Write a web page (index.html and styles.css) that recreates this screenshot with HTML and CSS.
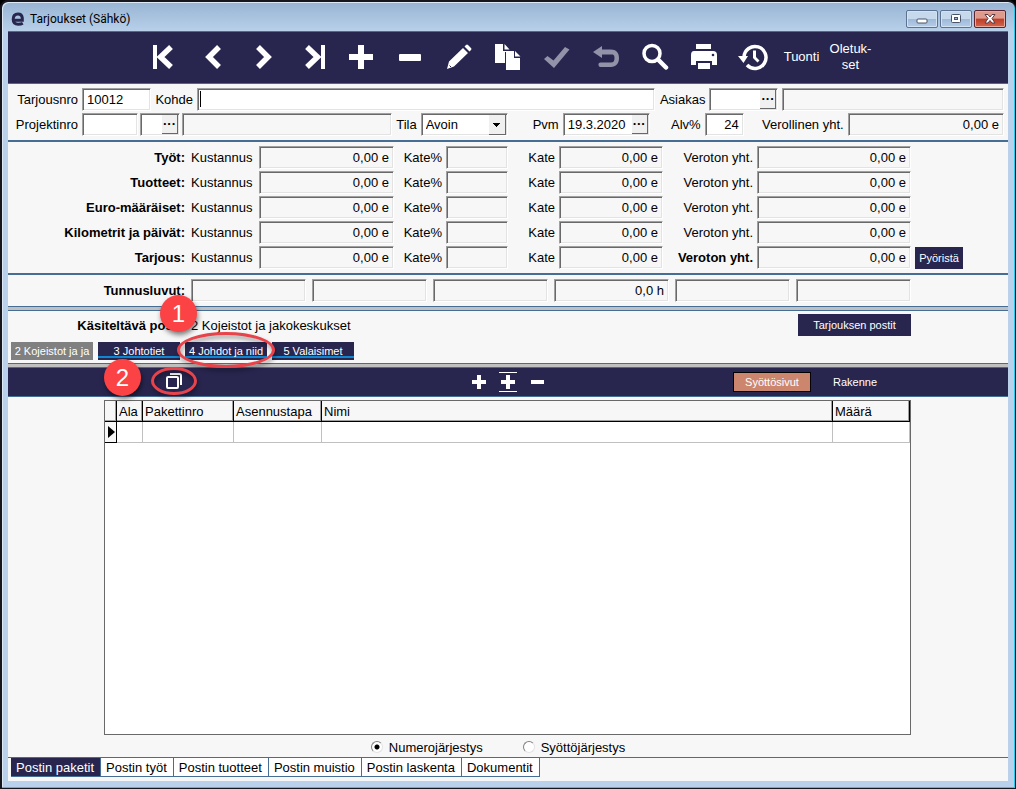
FILE: index.html
```html
<!DOCTYPE html>
<html lang="fi">
  <head>
    <meta charset="UTF-8" />
    <meta name="viewport" content="width=device-width, initial-scale=1.0" />
    <title>Tarjoukset (Sähkö)</title>
    <link rel="stylesheet" href="styles.css">
  </head>
  <body>
    <div class="window">
      <header class="titlebar">
        <svg class="logo" width="14" height="16" viewBox="0 0 14 16"><path d="M2.500 9.200H11.300V7C11 4.300 9.400 3 7 3 4 3 2.200 5 2.200 8.300s1.800 5 5 5c1.800 0 3.400-.3 4.600-1" fill="none" stroke="#28264f" stroke-width="3"/></svg>
        <h1>Tarjoukset (Sähkö)</h1>
        <div class="window-buttons">
          <button class="win-btn" aria-label="Pienennä"><svg width="14" height="12" viewBox="0 0 14 12"><rect x="2" y="6" width="10" height="4" rx="1" fill="#fff" stroke="#4a5468"/></svg></button>
          <button class="win-btn" aria-label="Suurenna"><svg width="14" height="12" viewBox="0 0 14 12"><rect x="2.500" y="1.500" width="9" height="8" rx="1" fill="#fff" stroke="#4a5468"/><rect x="5.500" y="4.500" width="3" height="2" fill="#9db9d8" stroke="#4a5468"/></svg></button>
          <button class="win-btn close" aria-label="Sulje"><svg width="14" height="12" viewBox="0 0 14 12"><path d="M2 1.500h3L7 4l2-2.500h3L9 5.500l3 4.500H9L7 7.500 5 10H2l3-4.500z" fill="#fff" stroke="#5a3a44"/></svg></button>
        </div>
      </header>

      <main class="content">
        <nav class="toolbar">
          <button aria-label="Ensimmäinen"><svg width="28" height="28" viewBox="0 0 28 28"><path d="M2 2h4v24H2z" fill="#fff"/><path d="M20 4 9.500 14 20 24" fill="none" stroke="#fff" stroke-width="5.500"/></svg></button>
          <button aria-label="Edellinen"><svg width="28" height="28" viewBox="0 0 28 28"><path d="M19 4 9 14l10 10" fill="none" stroke="#fff" stroke-width="5.500"/></svg></button>
          <button aria-label="Seuraava"><svg width="28" height="28" viewBox="0 0 28 28"><path d="M9 4l10 10L9 24" fill="none" stroke="#fff" stroke-width="5.500"/></svg></button>
          <button aria-label="Viimeinen"><svg width="28" height="28" viewBox="0 0 28 28"><path d="M23 2h4v24h-4z" fill="#fff"/><path d="M9 4l10.500 10L9 24" fill="none" stroke="#fff" stroke-width="5.500"/></svg></button>
          <button aria-label="Lisää"><svg width="28" height="28" viewBox="0 0 28 28"><path d="M11 2h6v9h9v6h-9v9h-6v-9H2v-6h9z" fill="#fff"/></svg></button>
          <button aria-label="Poista"><svg width="28" height="28" viewBox="0 0 28 28"><rect x="3" y="11" width="22" height="7" rx="1" fill="#fff"/></svg></button>
          <button aria-label="Muokkaa"><svg width="28" height="28" viewBox="0 0 28 28"><path d="M2 26l2-7.500L18 5l5 5L9 23.500zM19.500 3.500l1.500-1.500q1-1 2 0l3 3q1 1 0 2l-1.500 1.500z" fill="#fff"/><path d="M4.500 22.500 6 24" stroke="#28264f"/></svg></button>
          <button aria-label="Kopioi"><svg width="28" height="28" viewBox="0 0 28 28"><path d="M1 1h8v7h5v1h-3v11H1zM10.500 1l5 5.500h-5zM12 8h8v7h6v12H12zM21 8l5.500 5.500H21z" fill="#fff"/></svg></button>
          <button aria-label="Hyväksy"><svg width="28" height="28" viewBox="0 0 28 28"><path d="M1 16l3.500-3 6 4.500L22 4l4.500 2.500L11 25z" fill="#9292a8"/></svg></button>
          <button aria-label="Kumoa"><svg width="28" height="28" viewBox="0 0 28 28"><path d="M1 9l9-6v3.500h9c5 0 8 3 8 8.500s-3 9-8 9H8.500q-2 0-2-2v-1q0-1.500 2-1.500H19c2.500 0 3.500-1.500 3.500-4.500S21.500 11.500 19 11.500h-9V15z" fill="#9292a8"/></svg></button>
          <button aria-label="Etsi"><svg width="28" height="28" viewBox="0 0 28 28"><circle cx="11" cy="10.500" r="8" fill="none" stroke="#fff" stroke-width="3.500"/><path d="M17 16.500l8 8" stroke="#fff" stroke-width="4.500" stroke-linecap="round"/></svg></button>
          <button aria-label="Tulosta"><svg width="28" height="28" viewBox="0 0 28 28"><path d="M6 1h15v5H6zM4 8h19q4 0 4 4v10h-5v-4H6v4H1V12q0-4 3-4zM8 20h12v6H8z" fill="#fff"/><circle cx="23" cy="12" r="1.300" fill="#28264f"/></svg></button>
          <button aria-label="Historia"><svg width="30" height="28" viewBox="0 0 30 28"><path d="M6 14a11 11 0 1 1 3 8" fill="none" stroke="#fff" stroke-width="3.500"/><path d="M0 13h10l-4.500 7zM15 7.500h3V14l3.500 3.500-2 2L15 15z" fill="#fff"/></svg></button>
          <button>Tuonti</button>
          <button>Oletuk-<br>set</button>
        </nav>

        <section class="form">
          <div class="form-row">
            <label class="first" for="tarjousnro">Tarjousnro</label>
            <input class="w-code" id="tarjousnro" type="text" value="10012">
            <label class="w-kohde" for="kohde">Kohde</label>
            <input class="grow2 caret" id="kohde" type="text">
            <label class="w-asiakas" for="asiakas">Asiakas</label>
            <div class="picker w-code">
              <input id="asiakas" type="text">
              <button aria-label="Valitse asiakas">&middot;&middot;&middot;</button>
            </div>
            <input class="grow1" type="text" aria-label="Asiakkaan nimi" readonly>
          </div>
          <div class="form-row">
            <label class="first" for="projektinro">Projektinro</label>
            <div class="group grow2">
              <input class="w-proj" id="projektinro" type="text">
              <div class="picker w-sub">
                <input type="text" aria-label="Alaprojekti">
                <button aria-label="Valitse projekti">&middot;&middot;&middot;</button>
              </div>
              <input class="grow1" type="text" aria-label="Projektin nimi" readonly>
            </div>
            <label for="tila">Tila</label>
            <div class="select w-date">
              <select id="tila"><option>Avoin</option></select>
            </div>
            <label class="w-pvm" for="pvm">Pvm</label>
            <div class="picker w-date">
              <input id="pvm" type="text" value="19.3.2020">
              <button aria-label="Valitse päivä">&middot;&middot;&middot;</button>
            </div>
            <label class="w-alv-label" for="alv">Alv%</label>
            <input class="w-alv num" id="alv" type="text" value="24">
            <label class="w-yht" for="verollinen">Verollinen yht.</label>
            <input class="grow1 num" id="verollinen" type="text" value="0,00 e" readonly>
          </div>
        </section>

        <section class="costs">
          <b>Työt:</b>
          <label for="k1">Kustannus</label><input class="num" id="k1" value="0,00 e" readonly>
          <label for="p1">Kate%</label><input id="p1" readonly>
          <label for="m1">Kate</label><input class="num" id="m1" value="0,00 e" readonly>
          <label for="v1">Veroton yht.</label><input class="num" id="v1" value="0,00 e" readonly>
          <span></span>

          <b>Tuotteet:</b>
          <label for="k2">Kustannus</label><input class="num" id="k2" value="0,00 e" readonly>
          <label for="p2">Kate%</label><input id="p2" readonly>
          <label for="m2">Kate</label><input class="num" id="m2" value="0,00 e" readonly>
          <label for="v2">Veroton yht.</label><input class="num" id="v2" value="0,00 e" readonly>
          <span></span>

          <b>Euro-määräiset:</b>
          <label for="k3">Kustannus</label><input class="num" id="k3" value="0,00 e" readonly>
          <label for="p3">Kate%</label><input id="p3" readonly>
          <label for="m3">Kate</label><input class="num" id="m3" value="0,00 e" readonly>
          <label for="v3">Veroton yht.</label><input class="num" id="v3" value="0,00 e" readonly>
          <span></span>

          <b>Kilometrit ja päivät:</b>
          <label for="k4">Kustannus</label><input class="num" id="k4" value="0,00 e" readonly>
          <label for="p4">Kate%</label><input id="p4" readonly>
          <label for="m4">Kate</label><input class="num" id="m4" value="0,00 e" readonly>
          <label for="v4">Veroton yht.</label><input class="num" id="v4" value="0,00 e" readonly>
          <span></span>

          <b>Tarjous:</b>
          <label for="k5">Kustannus</label><input class="num" id="k5" value="0,00 e" readonly>
          <label for="p5">Kate%</label><input id="p5" readonly>
          <label for="m5">Kate</label><input class="num" id="m5" value="0,00 e" readonly>
          <label class="total" for="v5">Veroton yht.</label><input class="num" id="v5" value="0,00 e" readonly>
          <button class="dark-btn">Pyöristä</button>
        </section>

        <section class="figures">
          <b>Tunnusluvut:</b>
          <input aria-label="Tunnusluku 1" readonly>
          <input aria-label="Tunnusluku 2" readonly>
          <input aria-label="Tunnusluku 3" readonly>
          <input class="num" aria-label="Tunnusluku 4" value="0,0 h" readonly>
          <input aria-label="Tunnusluku 5" readonly>
          <input aria-label="Tunnusluku 6" readonly>
        </section>

        <div class="splitter"></div>

        <section class="post">
          <div class="post-head">
            <b>Käsiteltävä posti:</b>
            <span class="post-name">2 Kojeistot ja jakokeskukset</span>
            <button class="dark-btn wide">Tarjouksen postit</button>
          </div>
          <div class="post-tabs">
            <button class="post-tab current">2 Kojeistot ja ja</button>
            <button class="post-tab">3 Johtotiet</button>
            <div class="marked">
              <button class="post-tab">4 Johdot ja niid</button>
              <span class="ring ring-tab"></span>
              <span class="badge badge-tab">1</span>
            </div>
            <button class="post-tab">5 Valaisimet</button>
          </div>
        </section>

        <div class="splitter"></div>

        <div class="subbar">
          <div class="subbar-left">
            <div class="marked">
              <button aria-label="Kopioi paketti"><svg width="18" height="18" viewBox="0 0 18 18"><path d="M5 2h9.500q1.500 0 1.500 1.500V13" fill="none" stroke="#fff" stroke-width="2"/><rect x="2" y="5" width="11" height="11" rx="1" fill="none" stroke="#fff" stroke-width="2"/></svg></button>
              <span class="ring ring-copy"></span>
              <span class="badge badge-copy">2</span>
            </div>
          </div>
          <div class="subbar-mid">
            <button aria-label="Lisää rivi"><svg width="18" height="22" viewBox="0 0 18 22"><path d="M7 4h4v5h5v4h-5v5H7v-5H2V9h5z" fill="#fff"/></svg></button>
            <button aria-label="Lisää väliin"><svg width="18" height="22" viewBox="0 0 18 22"><path d="M0 1h18v1H0zM0 20h18v1H0zM7 4h4v5h5v4h-5v5H7v-5H2V9h5z" fill="#fff"/></svg></button>
            <button aria-label="Poista rivi"><svg width="18" height="22" viewBox="0 0 18 22"><rect x="3" y="9" width="13" height="4" fill="#fff"/></svg></button>
          </div>
          <div class="subbar-right">
            <button class="view-btn active">Syöttösivut</button>
            <button class="view-btn">Rakenne</button>
          </div>
        </div>

        <div class="grid-box">
          <table class="grid">
            <thead>
              <tr>
                <th class="c-mark"></th>
                <th class="c-ala">Ala</th>
                <th class="c-nro">Pakettinro</th>
                <th class="c-tapa">Asennustapa</th>
                <th>Nimi</th>
                <th class="c-maara">Määrä</th>
              </tr>
            </thead>
            <tbody>
              <tr>
                <td class="row-mark"><svg width="7" height="12" viewBox="0 0 7 12"><path d="M0 0l7 6-7 6z"/></svg></td>
                <td></td><td></td><td></td><td></td><td></td>
              </tr>
            </tbody>
          </table>
        </div>

        <div class="order">
          <label><input type="radio" name="order" checked>Numerojärjestys</label>
          <label><input type="radio" name="order">Syöttöjärjestys</label>
        </div>

        <nav class="bottom-tabs">
          <a class="active" href="#">Postin paketit</a>
          <a href="#">Postin työt</a>
          <a href="#">Postin tuotteet</a>
          <a href="#">Postin muistio</a>
          <a href="#">Postin laskenta</a>
          <a href="#">Dokumentit</a>
        </nav>
      </main>
    </div>
  </body>
</html>
```

FILE: styles.css
```css
* {
  box-sizing: border-box;
}

body {
  margin: 0;
  background-color: #000;
  font-family: "Liberation Sans", Arial, sans-serif;
  font-size: 13px;
  color: #000;
}

button,
input,
select {
  font: inherit;
  color: inherit;
  margin: 0;
  padding: 0;
  border: none;
  border-radius: 0;
  background: none;
}

svg {
  display: block;
}

.window {
  display: flex;
  flex-direction: column;
  min-height: 100vh;
  padding: 0 7px 7px 6px;
  border: 1px solid #16161c;
  border-top-width: 2px;
  border-left-width: 2px;
  border-radius: 8px 8px 0 0;
  background: linear-gradient(#98b4d3, #b9d1ea 30px);
  box-shadow: inset -1px -1px #2cc8e8, inset 1px 1px #dce8f5;
}

/* title bar */
.titlebar {
  display: flex;
  align-items: center;
  height: 29px;
  padding: 5px 2px 0 3px;
}

.titlebar h1 {
  margin: 0 0 0 5px;
  flex: 1;
  font-family: Roboto, "Open Sans", sans-serif;
  font-size: 12px;
  font-weight: normal;
}

.window-buttons {
  display: flex;
  gap: 2px;
}

.win-btn {
  display: flex;
  align-items: center;
  justify-content: center;
  width: 32px;
  height: 18px;
  border: 1px solid #5c7290;
  border-radius: 2px;
  background: linear-gradient(#c5d8ec 50%, #9db9d8 50%, #b5cde8);
  box-shadow: inset 0 0 0 1px #d3e2f2;
}

.win-btn.close {
  border-color: #5a2530;
  background: linear-gradient(#dd9b8d 45%, #bf3c25 50%, #d2664c);
  box-shadow: inset 0 0 0 1px #e6aa9e;
}

.content {
  flex: 1;
  display: flex;
  flex-direction: column;
  background-color: #f7f7f7;
}

/* toolbar */
.toolbar {
  display: flex;
  height: 53px;
  padding: 0 0 2px 132px;
  background-color: #28264f;
  border-top: 1px solid #466e94;
  border-bottom: 1px solid #466e94;
}

.toolbar button {
  display: flex;
  align-items: center;
  justify-content: center;
  width: 49px;
  color: #fff;
  line-height: 16px;
}

/* fields */
input,
select {
  min-width: 0;
  width: 100%;
  height: 23px;
  padding: 0 4px 1px;
  background-color: #fff;
  border: 1px solid;
  border-color: #a0a0a0 #fff #fff #a0a0a0;
  box-shadow: inset 1px 1px #696969, inset -1px -1px #e3e3e3;
}

input[readonly] {
  background-color: #f7f7f7;
}

.num {
  text-align: right;
}

.picker {
  position: relative;
}

.picker button,
.select::after {
  position: absolute;
  top: 2px;
  right: 2px;
  width: 16px;
  height: 19px;
  background-color: #f0f0f0;
  border-right: 1px solid #696969;
  border-bottom: 1px solid #696969;
  font-weight: bold;
  line-height: 18px;
  text-align: center;
}

.select {
  position: relative;
}

.select select {
  appearance: none;
}

.select::after {
  content: "";
  background-image: linear-gradient(#000, #000), linear-gradient(#000, #000), linear-gradient(#000, #000), linear-gradient(#000, #000);
  background-size: 7px 1px, 5px 1px, 3px 1px, 1px 1px;
  background-position: 4px 8px, 5px 9px, 6px 10px, 7px 11px;
  background-repeat: no-repeat;
  pointer-events: none;
}

.caret {
  background-image: linear-gradient(#000, #000);
  background-size: 1px 16px;
  background-position: 2px 2px;
  background-repeat: no-repeat;
}

/* offer header */
.form {
  display: flex;
  flex-direction: column;
  gap: 2px;
  padding: 4px 4px 4px 0;
  border-bottom: 2px solid #466e94;
}

.form-row {
  display: flex;
  align-items: center;
  gap: 4px;
}

.form-row > * {
  flex: none;
}

.form-row label {
  text-align: right;
  white-space: nowrap;
}

.form-row .first { width: 70px; }
.form-row .w-code { width: 69px; }
.form-row .w-kohde { width: 38px; }
.form-row .w-asiakas { width: 46px; }
.form-row .w-date { width: 87px; }
.form-row .w-pvm { width: 47px; }
.form-row .w-alv-label { width: 47px; }
.form-row .w-alv { width: 39px; }
.form-row .w-yht { width: 96px; }
.form-row .grow1 { flex: 100 1 0; }
.form-row .grow2 { flex: 212 1 0; }

.group {
  display: flex;
  gap: 2px;
}

.group > * {
  flex: none;
}

.group .w-proj { width: 56px; }
.group .w-sub { width: 40px; }

/* cost rows */
.costs {
  display: grid;
  grid-template-columns: 177px 66px 135fr 44px 62fr 43px 104fr 86px 154fr 48px;
  align-items: center;
  gap: 2px 4px;
  padding: 4px 45px 4px 0;
  border-bottom: 2px solid #466e94;
}

.costs b,
.costs label {
  text-align: right;
  white-space: nowrap;
}

.costs b + label {
  text-align: left;
  padding-left: 2px;
}

.costs .total {
  font-weight: bold;
}

.dark-btn {
  height: 22px;
  background-color: #28264f;
  color: #fff;
  font-size: 11px;
}

.dark-btn.wide {
  width: 113px;
}

.figures {
  display: flex;
  align-items: center;
  gap: 6px;
  padding: 4px 97px 4px 0;
}

.figures b,
.post-head b {
  flex: none;
  width: 177px;
  text-align: right;
}

.figures input {
  flex: 1;
}

.splitter {
  height: 5px;
  background-color: #c0c0c0;
  border-top: 1px solid #466e94;
  border-bottom: 1px solid #466e94;
}

/* current post */
.post {
  padding: 3px 0;
}

.post-head {
  display: flex;
  align-items: center;
  gap: 6px;
  padding-right: 97px;
}

.post-name {
  flex: 1;
}

.post-tabs {
  display: flex;
  gap: 5px;
  padding: 6px 3px 0;
}

.post-tab {
  display: block;
  width: 82px;
  height: 18px;
  overflow: hidden;
  white-space: nowrap;
  color: #fff;
  font-size: 11px;
  line-height: 16px;
  background: linear-gradient(#28264f 14px, #0f86cf 14px, #0f86cf 16px, #28264f 16px);
}

.post-tab.current {
  background: #808080;
}

.marked {
  position: relative;
}

/* numbered guide marks */
.ring {
  position: absolute;
  z-index: 1;
  border: 3px solid #e8434a;
  border-radius: 50%;
  filter: drop-shadow(1px 3px 2px rgba(0, 0, 0, 0.4));
  pointer-events: none;
}

.ring-tab {
  left: -8px;
  top: -10px;
  width: 98px;
  height: 36px;
}

.ring-copy {
  left: -14px;
  top: -5px;
  width: 46px;
  height: 28px;
}

.badge {
  position: absolute;
  z-index: 2;
  width: 37px;
  height: 37px;
  border-radius: 50%;
  background-color: #fb4245;
  box-shadow: 1px 3px 5px rgba(0, 0, 0, 0.5);
  color: #fff;
  font-size: 24px;
  line-height: 37px;
  text-align: center;
}

.badge-tab {
  left: -25px;
  top: -47px;
}

.badge-copy {
  left: -61px;
  top: -13px;
}

/* package toolbar */
.subbar {
  display: grid;
  grid-template-columns: 1fr auto 1fr;
  align-items: center;
  height: 29px;
  background-color: #28264f;
  border-bottom: 1px solid #466e94;
  color: #fff;
}

.subbar-left {
  padding-left: 157px;
}

.subbar-left .marked {
  width: 18px;
}

.subbar-mid {
  display: flex;
  gap: 11px;
}

.subbar-right {
  display: flex;
  justify-content: flex-end;
  gap: 5px;
  padding-right: 114px;
}

.view-btn {
  width: 78px;
  height: 20px;
  font-size: 11px;
}

.view-btn.active {
  background-color: #cd866e;
  border: 1px solid #000;
}

/* package table */
.grid-box {
  flex: 1;
  margin: 3px 97px 0 96px;
  background-color: #fff;
  border: 1px solid #696969;
}

.grid {
  width: 100%;
  table-layout: fixed;
  border-collapse: separate;
  border-spacing: 0;
}

.grid th {
  height: 21px;
  padding: 0 2px;
  background-color: #f7f7f7;
  border-right: 1px solid #000;
  border-bottom: 1px solid #000;
  box-shadow: inset -1px -1px #a0a0a0;
  font-weight: normal;
  text-align: left;
}

.grid td {
  height: 21px;
  padding: 0;
  border-right: 1px solid #c0c0c0;
  border-bottom: 1px solid #c0c0c0;
}

.grid .row-mark {
  padding-left: 3px;
  background-color: #f7f7f7;
  border-color: #000;
}

.c-mark { width: 12px; }
.c-ala { width: 26px; }
.c-nro { width: 91px; }
.c-tapa { width: 88px; }
.c-maara { width: 77px; }

/* sort order */
.order {
  display: flex;
  justify-content: center;
  gap: 40px;
  height: 22px;
  padding: 2px 20px 0 0;
}

.order label {
  display: flex;
  align-items: center;
  gap: 6px;
}

.order input {
  appearance: none;
  width: 12px;
  height: 12px;
  padding: 0;
  border-radius: 50%;
  border-color: #808080 #e3e3e3 #e3e3e3 #808080;
  box-shadow: none;
}

.order input:checked {
  background-image: radial-gradient(#000 2px, transparent 3px);
}

/* bottom tabs */
.bottom-tabs {
  display: flex;
  height: 24px;
  padding: 0 3px 4px;
  border-top: 1px solid #466e94;
}

.bottom-tabs a {
  padding: 0 6px 0 5px;
  background-color: #fff;
  border-right: 1px solid #466e94;
  border-bottom: 1px solid #466e94;
  color: #000;
  line-height: 19px;
  text-decoration: none;
}

.bottom-tabs a.active {
  background-color: #28264f;
  color: #fff;
}
```
